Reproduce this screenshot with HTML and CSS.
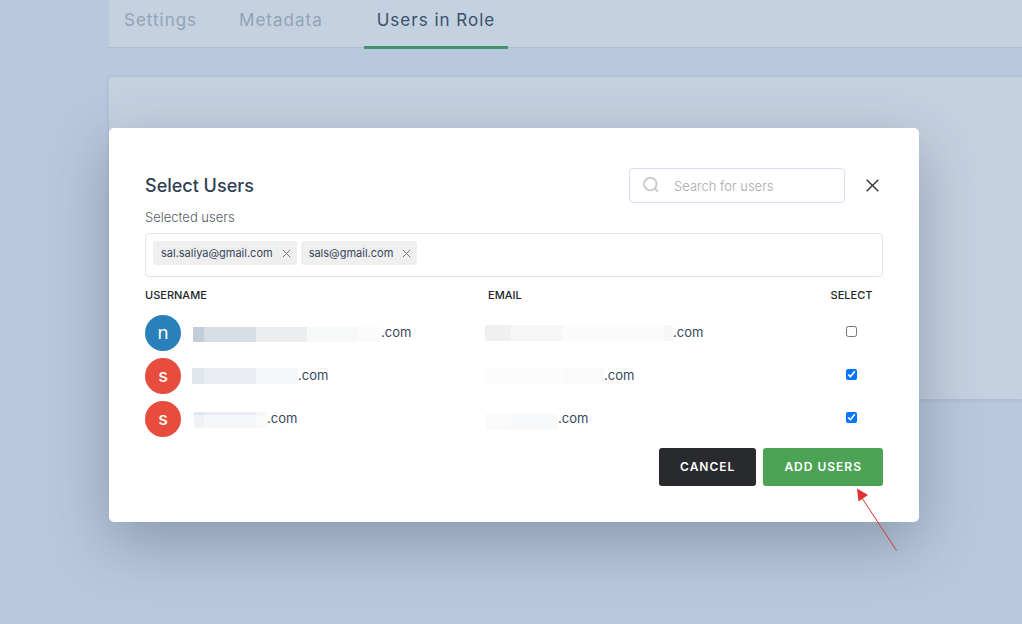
FILE: index.html
```html
<!DOCTYPE html>
<html lang="en">
<head>
<meta charset="utf-8">
<title>Users in Role</title>
<meta name="viewport" content="width=device-width, initial-scale=1">
<link rel="stylesheet" href="styles.css">
</head>
<body>
<div class="page">
  <nav class="tabs" aria-label="Role">
    <a class="tab" href="#settings">Settings</a>
    <a class="tab" href="#metadata">Metadata</a>
    <a class="tab tab-active" href="#users" aria-current="page">Users in Role</a>
  </nav>
  <main class="panel"></main>
</div>

<div class="overlay">
  <section class="modal" role="dialog" aria-labelledby="modal-title">
    <header class="modal-header">
      <h1 class="modal-title" id="modal-title">Select Users</h1>
      <label class="search">
        <svg class="search-icon" viewBox="0 0 18 18" aria-hidden="true"><circle cx="8.300" cy="8" r="6.300"/><path d="M12.700 12.500 16 15.500"/></svg>
        <input class="search-input" type="text" placeholder="Search for users" aria-label="Search for users">
      </label>
      <button class="close" type="button" aria-label="Close">
        <svg class="close-icon" viewBox="0 0 13 13" aria-hidden="true"><path d="M.7.7l11.6 11.6M12.3.7.7 12.3"/></svg>
      </button>
    </header>

    <p class="selected-label" id="selected-label">Selected users</p>
    <div class="selected" role="group" aria-labelledby="selected-label">
      <span class="chip">sal.saliya@gmail.com
        <button class="chip-remove" type="button" aria-label="Remove sal.saliya@gmail.com"><svg class="chip-icon" viewBox="0 0 9 9" aria-hidden="true"><path d="M.8.8l7.4 7.4M8.2.8.8 8.2"/></svg></button>
      </span>
      <span class="chip">sals@gmail.com
        <button class="chip-remove" type="button" aria-label="Remove sals@gmail.com"><svg class="chip-icon" viewBox="0 0 9 9" aria-hidden="true"><path d="M.8.8l7.4 7.4M8.2.8.8 8.2"/></svg></button>
      </span>
    </div>

    <table class="users">
      <thead>
        <tr><th class="col-name">USERNAME</th><th>EMAIL</th><th class="col-select">SELECT</th></tr>
      </thead>
      <tbody>
        <tr>
          <td><div class="user"><span class="avatar avatar-blue">n</span><span class="mask mask-name-1"></span><span class="domain">.com</span></div></td>
          <td><div class="email"><span class="mask mask-email-1"></span><span class="domain">.com</span></div></td>
          <td class="col-select"><input class="check" type="checkbox" aria-label="Select first user"></td>
        </tr>
        <tr>
          <td><div class="user"><span class="avatar avatar-red">s</span><span class="mask mask-name-2"></span><span class="domain">.com</span></div></td>
          <td><div class="email"><span class="mask mask-email-2"></span><span class="domain">.com</span></div></td>
          <td class="col-select"><input class="check" type="checkbox" checked aria-label="Select second user"></td>
        </tr>
        <tr>
          <td><div class="user"><span class="avatar avatar-red">s</span><span class="mask mask-name-3"></span><span class="domain">.com</span></div></td>
          <td><div class="email"><span class="mask mask-email-3"></span><span class="domain">.com</span></div></td>
          <td class="col-select"><input class="check" type="checkbox" checked aria-label="Select third user"></td>
        </tr>
      </tbody>
    </table>

    <footer class="actions">
      <button class="btn btn-dark" type="button">CANCEL</button>
      <button class="btn btn-green" type="button">ADD USERS</button>
      <svg class="arrow" viewBox="0 0 42 64" aria-hidden="true"><path class="arrow-line" d="M6 10 40.500 62.500"/><path class="arrow-head" d="M1 .5 12 7 2.500 13.500z"/></svg>
    </footer>
  </section>
</div>
</body>
</html>
```
FILE: styles.css
```css
* {
  box-sizing: border-box;
}

body {
  margin: 0;
  min-height: 100vh;
  background: #b9c8dc;
  color: #37475c;
  font-family: Inter, "Liberation Sans", sans-serif;
  font-size: 13px;
}

/* Page behind the dialog */
.page {
  padding-left: 109px;
}

.tabs {
  display: flex;
  height: 48px;
  background: #c4d1e1;
  border-bottom: 1px solid #adbbcf;
}

.tab {
  height: 49px;
  margin-right: 12px;
  padding: 0 15px;
  color: #93a2b5;
  font-size: 17px;
  line-height: 40px;
  letter-spacing: 1px;
  text-decoration: none;
  border-bottom: 3px solid transparent;
}

.tab-active {
  margin-left: 14px;
  padding: 0 13px;
  color: #3b506a;
  border-bottom-color: #44936a;
  border-radius: 1px;
}

.panel {
  height: 322px;
  margin-top: 29px;
  background: #c4d1e1;
  border-radius: 4px 0 0 4px;
  box-shadow: 0 1px 4px rgba(70, 95, 130, 0.15);
}

/* Dialog */
.overlay {
  position: absolute;
  inset: 0;
  padding: 128px 103px 0 109px;
}

.modal {
  padding: 40px 36px 36px;
  background: #fff;
  border-radius: 5px;
  box-shadow: 0 20px 60px rgba(50, 60, 80, 0.35);
}

.modal-header {
  display: flex;
  align-items: center;
  height: 35px;
}

.modal-title {
  flex: 1;
  margin: 0;
  color: #2f3f54;
  font-size: 18px;
  font-weight: 500;
  line-height: 24px;
}

.search {
  display: flex;
  align-items: center;
  gap: 14px;
  width: 216px;
  height: 35px;
  padding: 0 12px;
  border: 1px solid #d8deeb;
  border-radius: 4px;
}

.search-icon {
  flex: none;
  width: 18px;
  height: 18px;
  margin-bottom: 1px;
  fill: none;
  stroke: #ccc;
  stroke-width: 2;
}

.search-input {
  flex: 1;
  min-width: 0;
  padding: 0;
  background: none;
  border: 0;
  color: #37475c;
  font: 300 13px Inter, "Liberation Sans", sans-serif;
}

.search-input::placeholder {
  color: #a9a9a9;
}

.close,
.chip-remove {
  display: flex;
  padding: 0;
  background: none;
  border: 0;
}

.close {
  margin: 0 4px 1px 21px;
}

.close-icon {
  width: 13px;
  height: 13px;
  stroke: #333;
  stroke-width: 1.4;
}

.selected-label {
  margin: 5px 0 6px;
  color: #545d66;
  font-weight: 300;
  line-height: 19px;
}

.selected {
  display: flex;
  align-items: flex-start;
  gap: 4px;
  min-height: 44px;
  padding: 7px;
  border: 1px solid #e2e4e8;
  border-radius: 4px;
}

.chip {
  display: flex;
  align-items: center;
  gap: 9px;
  height: 24px;
  padding: 0 6px 1px 8px;
  background: #efefef;
  border-radius: 3px;
  font-size: 11px;
}

.chip-icon {
  width: 9px;
  height: 9px;
  margin-top: 1px;
  stroke: #777;
  stroke-width: 1;
}

.users {
  width: 100%;
  border-collapse: collapse;
  table-layout: fixed;
}

.users th {
  height: 34px;
  padding: 1px 0 0;
  color: #212529;
  font-size: 11px;
  font-weight: 500;
  text-align: left;
}

.users td {
  height: 43px;
  padding: 0;
}

.users .col-name {
  width: 343px;
}

.users .col-select {
  width: 63px;
  text-align: center;
}

.user,
.email {
  display: flex;
  align-items: center;
}

.email {
  margin-left: -3px;
}

.domain {
  margin-bottom: 2px;
}

.avatar {
  width: 36px;
  height: 36px;
  margin-right: 12px;
  border-radius: 50%;
  color: #fff;
  font-family: "DejaVu Sans", sans-serif;
  font-size: 18px;
  line-height: 35px;
  text-align: center;
}

.avatar-blue {
  background: #2a80b9;
}

.avatar-red {
  background: #e84c3d;
  font-family: Inter, sans-serif;
  font-weight: 500;
}

/* Hidden parts of the addresses */
.mask {
  height: 16px;
}

.mask-name-1 {
  width: 188px;
  height: 15px;
  margin-top: 3px;
  background: linear-gradient(90deg, #c1ced8 11px, #d6dee3 11px 63px, #ecedef 63px 114px, #f7f8f8 114px 165px, #fbfbfb 165px);
}

.mask-name-2 {
  width: 106px;
  margin-left: -1px;
  background: linear-gradient(90deg, #dfe6ec 12px, #eaedf2 12px 64px, #f5f6f8 64px);
}

.mask-name-3 {
  width: 73px;
  margin-top: 2px;
  margin-left: 1px;
  background:
    linear-gradient(90deg, #dfe6ee 10px, #e9edf3 10px 62px, #f5f6f9 62px) top / 100% 3px no-repeat,
    linear-gradient(90deg, #eff1f5 10px, #f6f7f9 10px 62px, #fafafb 62px);
}

.mask-email-1 {
  width: 188px;
  background: linear-gradient(90deg, #f0f0f0 26px, #f6f6f6 26px 77px, #fbfbfb 77px 179px, #f7f7f7 179px);
}

.mask-email-2 {
  width: 119px;
  background: linear-gradient(90deg, #fcfcfc 77px, #fafafa 77px);
}

.mask-email-3 {
  width: 73px;
  margin-top: 6px;
  background: linear-gradient(90deg, #fafafa 26px, #f8f9fb 26px);
}

.check {
  display: block;
  width: 11px;
  height: 11px;
  margin: 0 auto 3px;
}

.actions {
  position: relative;
  display: flex;
  justify-content: flex-end;
  gap: 7px;
  margin-top: 8px;
}

.btn {
  height: 38px;
  padding: 0 21px 1px;
  border: 0;
  border-radius: 3px;
  color: #fff;
  font: 600 12px Inter, "Liberation Sans", sans-serif;
  letter-spacing: 1px;
}

.btn-dark {
  background: #292a2d;
}

.btn-green {
  background: #4da355;
}

/* Pointer over the dialog's lower edge */
.arrow {
  position: absolute;
  top: 100%;
  right: -15px;
  width: 42px;
  height: 64px;
  margin-top: 2px;
}

.arrow-line {
  stroke: #dc3232;
  stroke-width: 1;
}

.arrow-head {
  fill: #dc3232;
}
```
